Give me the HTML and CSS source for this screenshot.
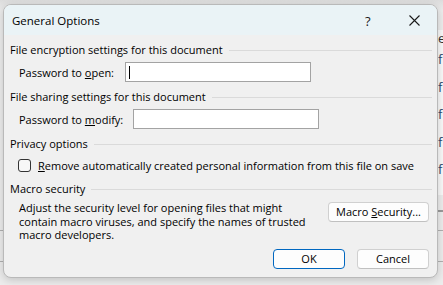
FILE: index.html
```html
<!DOCTYPE html>
<html lang="en">
<head>
<meta charset="utf-8">
<title>General Options</title>
<link rel="stylesheet" href="styles.css">
</head>
<body>
<div class="desktop">
  <div class="app-strip">
    <span class="app-letter first">e</span>
    <span class="app-letter">f</span>
    <span class="app-letter">f</span>
    <span class="app-letter">f</span>
    <span class="app-letter">f</span>
    <span class="app-letter">f</span>
  </div>
  <div class="app-rule rule-a"></div>
  <div class="app-rule rule-b"></div>
  <div class="app-rule rule-c"></div>

  <div class="dialog">
    <div class="titlebar">
      <span class="title">General Options</span>
      <span class="help">?</span>
      <svg class="close" width="11" height="11" viewBox="0 0 11 11"><path d="M0.5 0.5 L10.5 10.5 M10.5 0.5 L0.5 10.5" stroke="#1a1a1a" stroke-width="1.1" fill="none"/></svg>
    </div>
    <div class="body">
      <div class="group-head g1"><span>File encryption settings for this document</span><i class="rule"></i></div>
      <div class="field-row r1">
        <label class="field-label l-open">Password to <u>o</u>pen:</label>
        <div class="input focused"><span class="caret"></span></div>
      </div>
      <div class="group-head g2"><span>File sharing settings for this document</span><i class="rule"></i></div>
      <div class="field-row r2">
        <label class="field-label l-modify">Password to <u>m</u>odify:</label>
        <div class="input"></div>
      </div>
      <div class="group-head g3"><span>Privacy options</span><i class="rule"></i></div>
      <div class="check-row">
        <span class="checkbox"></span>
        <span><u>R</u>emove automatically created personal information from this file on save</span>
      </div>
      <div class="group-head g4"><span>Macro security</span><i class="rule"></i></div>
      <div class="macro-row">
        <p class="macro-text">Adjust the security level for opening files that might<br>contain macro viruses, and specify the names of trusted<br>macro developers.</p>
        <button class="btn macro-btn">Macro <u>S</u>ecurity...</button>
      </div>
      <div class="footer">
        <button class="btn ok">OK</button>
        <button class="btn">Cancel</button>
      </div>
    </div>
  </div>
</div>
</body>
</html>
```
FILE: styles.css
```css
* { box-sizing: border-box; }
html, body { margin: 0; padding: 0; }
body {
  width: 443px;
  height: 285px;
  overflow: hidden;
  background: #e4e4e4;
  font-family: "Open Sans", "Noto Sans", sans-serif;
  font-size: 11px;
  color: #000;
}
.desktop {
  position: relative;
  width: 443px;
  height: 285px;
  background: linear-gradient(#dcdcdc 0, #ececec 10px, #ececec 100%);
}
.app-strip {
  position: absolute;
  left: 437px;
  top: 30px;
  width: 6px;
  height: 165px;
  background: #f9f9f9;
  display: flex;
  flex-direction: column;
  padding-left: 1px;
  overflow: hidden;
}
.app-letter {
  color: #2c4a6a;
  font-size: 13px;
  line-height: 27.5px;
}
.app-letter.first { line-height: 16px; color: #333; }
.app-rule {
  position: absolute;
  height: 2px;
  background: #9a9a9a;
}
.rule-a { left: 437px; width: 6px; top: 210px; }
.rule-b { left: 0; width: 443px; top: 230px; height: 1px; background: #b0b0b0; }
.rule-c { left: 0; width: 443px; top: 261px; height: 1px; background: #b0b0b0; }

.dialog {
  position: absolute;
  left: 3px;
  top: 4px;
  width: 435px;
  height: 274px;
  background: #f0f0f0;
  border: 1px solid #b9b9b9;
  border-radius: 8px;
  overflow: hidden;
  box-shadow: 0 2px 8px rgba(0, 0, 0, 0.18);
  display: flex;
  flex-direction: column;
}
.titlebar {
  height: 30px;
  flex: none;
  background: #eaf3f6;
  display: flex;
  align-items: center;
  padding-left: 8px;
  padding-top: 1px;
  font-size: 11.5px;
}
.title { flex: 1; color: #000; }
.help { width: 12px; margin-right: 32px; font-size: 13px; color: #1a1a1a; }
.close { margin-right: 17px; }

.body {
  flex: 1;
  display: flex;
  flex-direction: column;
  padding: 7px 6px 0 6px;
}
.group-head {
  display: flex;
  align-items: center;
  height: 16px;
  line-height: 16px;
  white-space: nowrap;
}
.group-head .rule {
  flex: 1;
  height: 1px;
  background: #dadada;
  margin-left: 6px;
  margin-right: -1px;
}
.g2, .g3 { margin-top: 7px; }
.g4 { margin-top: 8px; }

.field-row {
  display: flex;
  align-items: center;
  height: 20px;
  margin-top: 4px;
  padding-left: 9px;
}
.field-label { white-space: nowrap; }
.field-label.l-open { width: 106px; }
.field-label.l-modify { width: 114px; }
.input {
  width: 186px;
  height: 20px;
  background: #fff;
  border: 1px solid #a3a3a3;
  display: flex;
  align-items: center;
  padding-left: 3px;
}
.caret { width: 1px; height: 13px; background: #000; }

.check-row {
  display: flex;
  align-items: center;
  height: 16px;
  margin-top: 5px;
  padding-left: 8px;
  white-space: nowrap;
}
.checkbox {
  width: 13px;
  height: 13px;
  border: 1px solid #333;
  border-radius: 3px;
  background: #f7f7f7;
  margin-right: 7px;
  flex: none;
}

.macro-row {
  display: flex;
  align-items: flex-start;
  margin-top: 4px;
  padding-left: 9px;
  padding-right: 2px;
}
.macro-text {
  margin: 0;
  flex: 1;
  line-height: 13.5px;
  white-space: nowrap;
}
.btn {
  font-family: inherit;
  font-size: 11px;
  color: #000;
  background: #fdfdfd;
  border: 1px solid #d0d0d0;
  border-bottom-color: #c0c0c0;
  border-radius: 4px;
  height: 20px;
  padding: 0;
  line-height: 18px;
}
.macro-btn { width: 101px; margin-top: 1px; }
.footer {
  display: flex;
  justify-content: flex-end;
  gap: 12px;
  margin-top: 7px;
  padding-right: 2px;
}
.footer .btn { width: 72px; }
.btn.ok { border-color: #0067c0; }
u { text-decoration: underline; text-underline-offset: 1px; }
```
